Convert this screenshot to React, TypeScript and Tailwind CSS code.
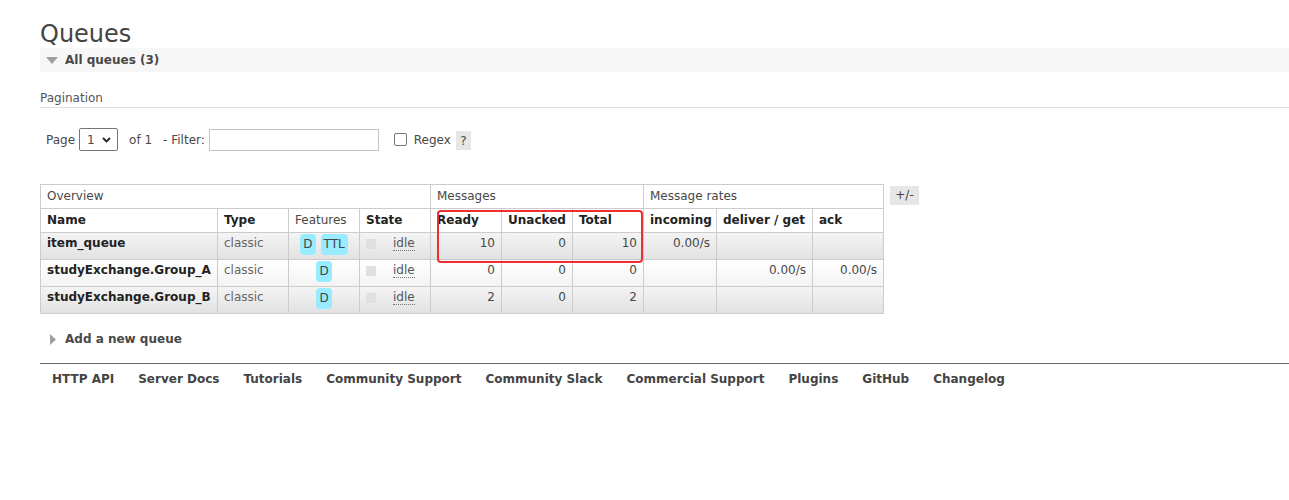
import React from "react";

type Row = {
  name: string;
  type: string;
  features: string[];
  state: string;
  ready: string;
  unacked: string;
  total: string;
  incoming: string;
  deliver: string;
  ack: string;
};

const rows: Row[] = [
  { name: "item_queue", type: "classic", features: ["D", "TTL"], state: "idle", ready: "10", unacked: "0", total: "10", incoming: "0.00/s", deliver: "", ack: "" },
  { name: "studyExchange.Group_A", type: "classic", features: ["D"], state: "idle", ready: "0", unacked: "0", total: "0", incoming: "", deliver: "0.00/s", ack: "0.00/s" },
  { name: "studyExchange.Group_B", type: "classic", features: ["D"], state: "idle", ready: "2", unacked: "0", total: "2", incoming: "", deliver: "", ack: "" },
];

const footerLinks = ["HTTP API", "Server Docs", "Tutorials", "Community Support", "Community Slack", "Commercial Support", "Plugins", "GitHub", "Changelog"];

function QueueTable() {
  const th = "border border-[#ccc] px-[6px] h-[24px] text-left align-middle";
  const td = "border border-[#ccc] px-[6px] pt-[3px] align-top";
  return (
    <div className="flex items-start gap-[6px]">
      <div className="relative">
        <table className="table-fixed border-collapse w-[843px] text-[12px] leading-[15px]">
          <colgroup>
            <col className="w-[177px]" />
            <col className="w-[71px]" />
            <col className="w-[71px]" />
            <col className="w-[71px]" />
            <col className="w-[71px]" />
            <col className="w-[71px]" />
            <col className="w-[71px]" />
            <col className="w-[73px]" />
            <col className="w-[96px]" />
            <col className="w-[71px]" />
          </colgroup>
          <thead>
            <tr>
              <th colSpan={4} className={th + " font-normal"}>Overview</th>
              <th colSpan={3} className={th + " font-normal"}>Messages</th>
              <th colSpan={3} className={th + " font-normal"}>Message rates</th>
            </tr>
            <tr>
              <th className={th + " font-bold text-[#222]"}>Name</th>
              <th className={th + " font-bold text-[#222]"}>Type</th>
              <th className={th + " font-normal"}>Features</th>
              <th className={th + " font-bold text-[#222]"}>State</th>
              <th className={th + " font-bold text-[#222]"}>Ready</th>
              <th className={th + " font-bold text-[#222]"}>Unacked</th>
              <th className={th + " font-bold text-[#222]"}>Total</th>
              <th className={th + " font-bold text-[#222]"}>incoming</th>
              <th className={th + " font-bold text-[#222]"}>deliver / get</th>
              <th className={th + " font-bold text-[#222]"}>ack</th>
            </tr>
          </thead>
          <tbody>
            {rows.map((r, i) => (
              <tr
                key={r.name}
                className={
                  "h-[27px] bg-linear-to-b " +
                  (i % 2 === 0 ? "from-[#f4f4f4] to-[#e1e1e1]" : "from-[#ffffff] to-[#f3f3f3]")
                }
              >
                <td className={td + " font-bold text-[#222]"}>{r.name}</td>
                <td className={td + " text-[#666]"}>{r.type}</td>
                <td className="border border-[#ccc] pt-[1px] align-top">
                  <div className="flex justify-center gap-[5px]">
                    {r.features.map((f) => (
                      <span key={f} className="h-[21px] leading-[21px] px-[3px] rounded-[4px] bg-[#99ebff] text-[#444]">
                        {f}
                      </span>
                    ))}
                  </div>
                </td>
                <td className={td}>
                  <div className="flex items-center">
                    <span className="w-[10px] h-[10px] bg-[#e0e0e0]" />
                    <span className="ml-[17px] border-b border-dotted border-[#777] leading-[14px] text-[#555]">{r.state}</span>
                  </div>
                </td>
                <td className={td + " text-right"}>{r.ready}</td>
                <td className={td + " text-right"}>{r.unacked}</td>
                <td className={td + " text-right"}>{r.total}</td>
                <td className={td + " text-right"}>{r.incoming}</td>
                <td className={td + " text-right"}>{r.deliver}</td>
                <td className={td + " text-right"}>{r.ack}</td>
              </tr>
            ))}
          </tbody>
        </table>
        <div className="absolute left-[397px] top-[26px] w-[206px] h-[53px] border-2 border-[#ee2f2f] rounded-[4px] pointer-events-none" />
      </div>
      <button className="mt-[2px] w-[29px] h-[19px] bg-[#e6e6e6] text-[12px] leading-[19px] text-center text-[#444]">+/-</button>
    </div>
  );
}

export default function App() {
  return (
    <div className="min-h-[500px] bg-white pl-[40px] text-[12px] text-[#484848] font-['DejaVu_Sans',Verdana,sans-serif]">
      <h1 className="pt-[21px] text-[24px] leading-[27px] font-normal text-[#444]">Queues</h1>

      <div className="h-[24px] bg-[#f7f7f7] flex items-center">
        <svg width="12" height="7" viewBox="0 0 12 7" className="ml-[6px]">
          <polygon points="0,0 12,0 6,7" fill="#a0a0a0" />
        </svg>
        <span className="ml-[7px] font-bold">All queues (3)</span>
      </div>

      <div className="mt-[19px] pb-[2px] border-b border-[#dedede] leading-[14px] text-[#555]">Pagination</div>

      <div className="mt-[20px] flex items-center h-[23px] pl-[6px]">
        <span>Page</span>
        <div className="relative ml-[4px]">
          <select className="appearance-none w-[39px] h-[23px] border border-[#767676] rounded-[2px] pl-[7px] text-[12px] bg-white">
            <option>1</option>
          </select>
          <svg width="9" height="6" viewBox="0 0 9 6" className="absolute right-[7px] top-[9px] pointer-events-none">
            <polyline points="1,1 4.5,4.5 8,1" fill="none" stroke="#222" strokeWidth="1.8" />
          </svg>
        </div>
        <span className="ml-[11px]">of 1</span>
        <span className="ml-[11px]">- Filter:</span>
        <input className="ml-[4px] w-[170px] h-[22px] border border-[#c4c4c4]" />
        <input type="checkbox" className="ml-[15px] w-[13px] h-[13px] appearance-none border border-[#767676] rounded-[2px] bg-white" />
        <span className="ml-[7px]">Regex</span>
        <span className="ml-[5px] w-[15px] h-[19px] bg-[#e6e6e6] flex items-center justify-center mt-[2px]">?</span>
      </div>

      <div className="mt-[33px]">
        <QueueTable />
      </div>

      <div className="mt-[18px] flex items-center h-[14px]">
        <svg width="6" height="11" viewBox="0 0 6 11" className="ml-[10px]">
          <polygon points="0,0 6,5.5 0,11" fill="#a0a0a0" />
        </svg>
        <span className="ml-[9px] font-bold">Add a new queue</span>
      </div>

      <div className="mt-[17px] border-t border-[#666] pt-[8px] flex leading-[14px]">
        {footerLinks.map((l) => (
          <a key={l} href="#" className="px-[12px] font-bold text-[#444]">
            {l}
          </a>
        ))}
      </div>
    </div>
  );
}
